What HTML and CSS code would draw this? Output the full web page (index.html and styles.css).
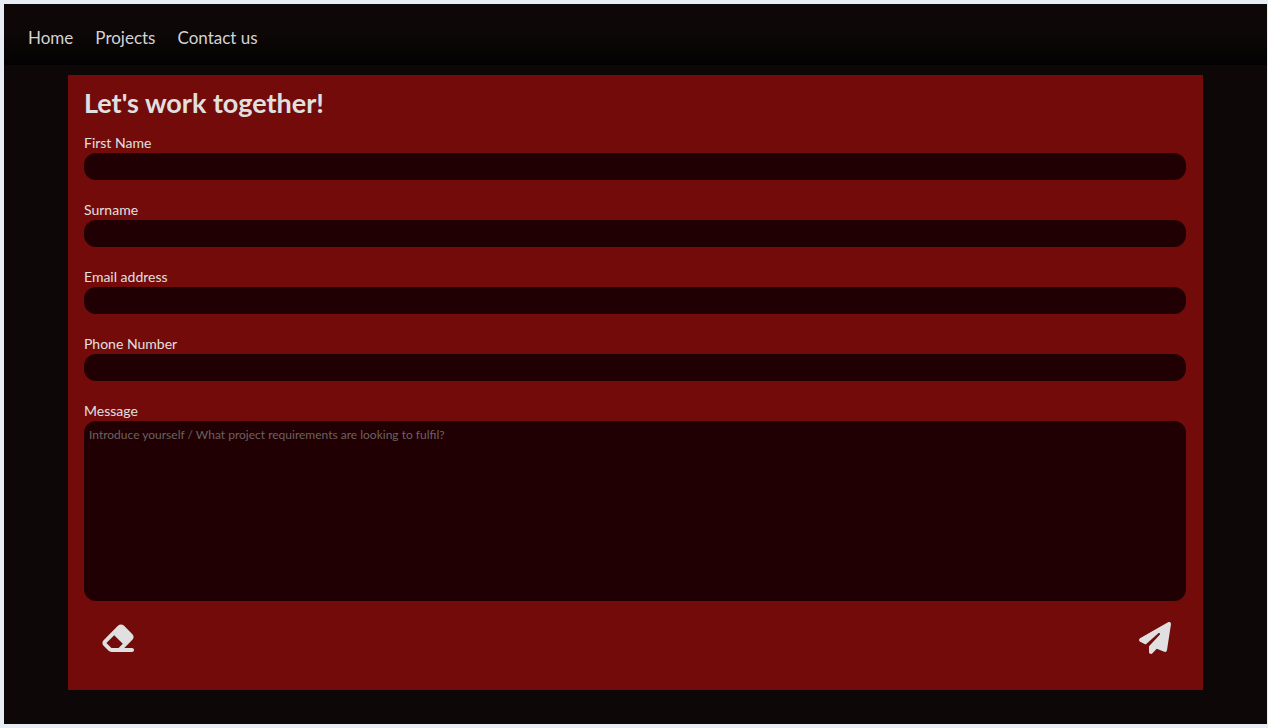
FILE: index.html
```html
<!DOCTYPE html>
<html lang="en">
<head>
<meta charset="utf-8">
<title>Contact us</title>
<link rel="stylesheet" href="styles.css">
</head>
<body>
<div class="page">
  <nav class="nav">
    <a href="#home">Home</a>
    <a href="#projects">Projects</a>
    <a href="#contact">Contact us</a>
  </nav>
  <main class="main">
    <form class="card">
      <h1 class="title">Let's work together!</h1>
      <div class="field"><label for="first">First Name</label><input class="box" id="first" type="text"></div>
      <div class="field"><label for="surname">Surname</label><input class="box" id="surname" type="text"></div>
      <div class="field"><label for="email">Email address</label><input class="box" id="email" type="email"></div>
      <div class="field"><label for="phone">Phone Number</label><input class="box" id="phone" type="tel"></div>
      <div class="field"><label for="message">Message</label><textarea class="box message" id="message" placeholder="Introduce yourself / What project requirements are looking to fulfil?"></textarea></div>
      <div class="actions">
        <button class="icon" type="reset" aria-label="Clear"><svg width="36" height="32" viewBox="0 0 576 512"><path d="M290.7 57.4L57.4 290.7c-25 25-25 65.5 0 90.5l80 80c12 12 28.3 18.7 45.3 18.7H512c17.7 0 32-14.3 32-32s-14.3-32-32-32H387.9L518.6 285.3c25-25 25-65.5 0-90.5L381.3 57.4c-25-25-65.5-25-90.5 0zM297.4 416H182.6l-80-80L227.3 211.3 364.7 348.7 297.4 416z"/></svg></button>
        <button class="icon" type="submit" aria-label="Send"><svg width="32" height="32" viewBox="0 0 512 512"><path d="M498.1 5.6c10.1 7 15.4 19.1 13.5 31.2l-64 416c-1.5 9.7-7.4 18.2-16 23s-18.9 5.4-28 1.6L284 427.7l-68.5 74.1c-8.9 9.7-22.9 12.9-35.2 8.1S160 493.2 160 480V396.4c0-4 1.5-7.8 4.2-10.7L331.8 202.8c5.8-6.3 5.6-16-.4-22s-15.7-6.4-22-.7L106 360.8 17.7 316.6C7.1 311.3 .3 300.7 0 288.9s5.9-22.8 16.1-28.7l448-256c10.7-6.1 23.9-5.5 34 1.4z"/></svg></button>
      </div>
    </form>
  </main>
</div>
</body>
</html>
```
FILE: styles.css
```css
* { box-sizing: border-box; }
body {
  margin: 0;
  min-height: 100vh;
  padding: 4px 1px 4px 4px;
  display: flex;
  background: #e6edf5;
  color: #e0e0e0;
  font-family: Lato, sans-serif;
}
.page {
  flex: 1;
  background: #0d0707;
}
.nav {
  display: flex;
  gap: 22px;
  padding: 22px 24px 15px;
  background: linear-gradient(#0d0707 50%, #030202);
}
.nav a {
  color: #d3d3d3;
  font-size: 17px;
  line-height: 24px;
  text-decoration: none;
}
.main { padding: 10px 64px 34px; }
.card {
  display: flex;
  flex-direction: column;
  gap: 20px;
  padding: 14px 17px 36px 16px;
  background: #720b0a;
}
.title {
  margin: 0 0 -4px;
  font-size: 27px;
  line-height: 28px;
  font-weight: 700;
}
.field { display: flex; flex-direction: column; }
.field label {
  font-size: 14px;
  line-height: 20px;
}
.box {
  width: 100%;
  height: 27px;
  border: 0;
  border-radius: 12px;
  padding: 5px;
  background: #200002;
  color: #e0e0e0;
  font: 12px/18px Lato, sans-serif;
}
.message {
  height: 180px;
  resize: none;
}
.box::placeholder { color: #6b6262; opacity: 1; }
.actions {
  display: flex;
  justify-content: space-between;
  padding: 1px 15px 0 16px;
}
.icon {
  display: flex;
  border: 0;
  padding: 0;
  background: none;
  cursor: pointer;
}
.icon svg { fill: #e0e0e0; }
```
